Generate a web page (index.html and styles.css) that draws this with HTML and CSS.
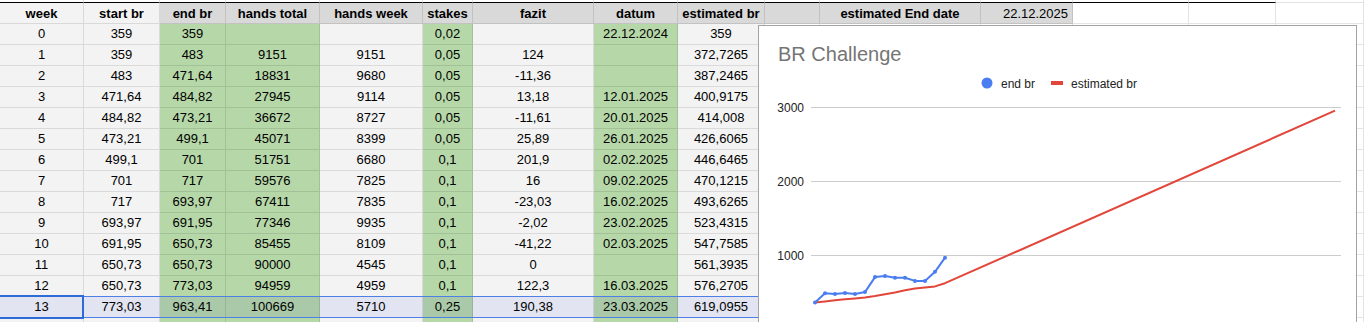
FILE: index.html
```html
<!DOCTYPE html>
<html>
<head>
<meta charset="utf-8">
<link rel="stylesheet" href="styles.css">
</head>
<body>
<div class="sheet">
  <div class="row top">
    <div class="c"></div><div class="c"></div><div class="c"></div><div class="c"></div><div class="c"></div><div class="c"></div><div class="c"></div><div class="c"></div><div class="c"></div><div class="c"></div><div class="c"></div><div class="c"></div><div class="c"></div><div class="c"></div><div class="c"></div>
  </div>
  <div class="row head">
    <div class="c hl">week</div><div class="c hl">start br</div><div class="c h">end br</div><div class="c h">hands total</div><div class="c h">hands week</div><div class="c h">stakes</div><div class="c h">fazit</div><div class="c h">datum</div><div class="c h">estimated br</div><div class="c h"></div><div class="c h">estimated End date</div><div class="c h val">22.12.2025</div><div class="c w"></div><div class="c w"></div><div class="c w last"></div>
  </div>
  <div class="row"><div class="c g">0</div><div class="c g">359</div><div class="c gr">359</div><div class="c gr"></div><div class="c g"></div><div class="c gr">0,02</div><div class="c g"></div><div class="c gr">22.12.2024</div><div class="c g">359</div><div class="c w"></div><div class="c w"></div><div class="c w"></div><div class="c w"></div><div class="c w"></div><div class="c w"></div></div>
  <div class="row"><div class="c g">1</div><div class="c g">359</div><div class="c gr">483</div><div class="c gr">9151</div><div class="c g">9151</div><div class="c gr">0,05</div><div class="c g">124</div><div class="c gr"></div><div class="c g">372,7265</div><div class="c w"></div><div class="c w"></div><div class="c w"></div><div class="c w"></div><div class="c w"></div><div class="c w"></div></div>
  <div class="row"><div class="c g">2</div><div class="c g">483</div><div class="c gr">471,64</div><div class="c gr">18831</div><div class="c g">9680</div><div class="c gr">0,05</div><div class="c g">-11,36</div><div class="c gr"></div><div class="c g">387,2465</div><div class="c w"></div><div class="c w"></div><div class="c w"></div><div class="c w"></div><div class="c w"></div><div class="c w"></div></div>
  <div class="row"><div class="c g">3</div><div class="c g">471,64</div><div class="c gr">484,82</div><div class="c gr">27945</div><div class="c g">9114</div><div class="c gr">0,05</div><div class="c g">13,18</div><div class="c gr">12.01.2025</div><div class="c g">400,9175</div><div class="c w"></div><div class="c w"></div><div class="c w"></div><div class="c w"></div><div class="c w"></div><div class="c w"></div></div>
  <div class="row"><div class="c g">4</div><div class="c g">484,82</div><div class="c gr">473,21</div><div class="c gr">36672</div><div class="c g">8727</div><div class="c gr">0,05</div><div class="c g">-11,61</div><div class="c gr">20.01.2025</div><div class="c g">414,008</div><div class="c w"></div><div class="c w"></div><div class="c w"></div><div class="c w"></div><div class="c w"></div><div class="c w"></div></div>
  <div class="row"><div class="c g">5</div><div class="c g">473,21</div><div class="c gr">499,1</div><div class="c gr">45071</div><div class="c g">8399</div><div class="c gr">0,05</div><div class="c g">25,89</div><div class="c gr">26.01.2025</div><div class="c g">426,6065</div><div class="c w"></div><div class="c w"></div><div class="c w"></div><div class="c w"></div><div class="c w"></div><div class="c w"></div></div>
  <div class="row"><div class="c g">6</div><div class="c g">499,1</div><div class="c gr">701</div><div class="c gr">51751</div><div class="c g">6680</div><div class="c gr">0,1</div><div class="c g">201,9</div><div class="c gr">02.02.2025</div><div class="c g">446,6465</div><div class="c w"></div><div class="c w"></div><div class="c w"></div><div class="c w"></div><div class="c w"></div><div class="c w"></div></div>
  <div class="row"><div class="c g">7</div><div class="c g">701</div><div class="c gr">717</div><div class="c gr">59576</div><div class="c g">7825</div><div class="c gr">0,1</div><div class="c g">16</div><div class="c gr">09.02.2025</div><div class="c g">470,1215</div><div class="c w"></div><div class="c w"></div><div class="c w"></div><div class="c w"></div><div class="c w"></div><div class="c w"></div></div>
  <div class="row"><div class="c g">8</div><div class="c g">717</div><div class="c gr">693,97</div><div class="c gr">67411</div><div class="c g">7835</div><div class="c gr">0,1</div><div class="c g">-23,03</div><div class="c gr">16.02.2025</div><div class="c g">493,6265</div><div class="c w"></div><div class="c w"></div><div class="c w"></div><div class="c w"></div><div class="c w"></div><div class="c w"></div></div>
  <div class="row"><div class="c g">9</div><div class="c g">693,97</div><div class="c gr">691,95</div><div class="c gr">77346</div><div class="c g">9935</div><div class="c gr">0,1</div><div class="c g">-2,02</div><div class="c gr">23.02.2025</div><div class="c g">523,4315</div><div class="c w"></div><div class="c w"></div><div class="c w"></div><div class="c w"></div><div class="c w"></div><div class="c w"></div></div>
  <div class="row"><div class="c g">10</div><div class="c g">691,95</div><div class="c gr">650,73</div><div class="c gr">85455</div><div class="c g">8109</div><div class="c gr">0,1</div><div class="c g">-41,22</div><div class="c gr">02.03.2025</div><div class="c g">547,7585</div><div class="c w"></div><div class="c w"></div><div class="c w"></div><div class="c w"></div><div class="c w"></div><div class="c w"></div></div>
  <div class="row"><div class="c g">11</div><div class="c g">650,73</div><div class="c gr">650,73</div><div class="c gr">90000</div><div class="c g">4545</div><div class="c gr">0,1</div><div class="c g">0</div><div class="c gr"></div><div class="c g">561,3935</div><div class="c w"></div><div class="c w"></div><div class="c w"></div><div class="c w"></div><div class="c w"></div><div class="c w"></div></div>
  <div class="row"><div class="c g">12</div><div class="c g">650,73</div><div class="c gr">773,03</div><div class="c gr">94959</div><div class="c g">4959</div><div class="c gr">0,1</div><div class="c g">122,3</div><div class="c gr">16.03.2025</div><div class="c g">576,2705</div><div class="c w"></div><div class="c w"></div><div class="c w"></div><div class="c w"></div><div class="c w"></div><div class="c w"></div></div>
  <div class="row sel"><div class="c g act">13</div><div class="c g">773,03</div><div class="c gr">963,41</div><div class="c gr">100669</div><div class="c g">5710</div><div class="c gr">0,25</div><div class="c g">190,38</div><div class="c gr">23.03.2025</div><div class="c g">619,0955</div><div class="c w"></div><div class="c w"></div><div class="c w"></div><div class="c w"></div><div class="c w"></div><div class="c w"></div></div>
  <div class="row tail"><div class="c g"></div><div class="c g"></div><div class="c gr"></div><div class="c gr"></div><div class="c g"></div><div class="c gr"></div><div class="c g"></div><div class="c gr"></div><div class="c g"></div><div class="c w"></div><div class="c w"></div><div class="c w"></div><div class="c w"></div><div class="c w"></div><div class="c w"></div></div>
</div>

<div class="chart">
  <svg width="597" height="296" viewBox="759 26 597 296" xmlns="http://www.w3.org/2000/svg">
    <text x="778" y="61" class="title">BR Challenge</text>
    <circle cx="987" cy="83" r="5.5" fill="#4a7df0"/>
    <text x="1001" y="87.5" class="lbl">end br</text>
    <rect x="1051" y="81" width="12" height="4" fill="#e2463a"/>
    <text x="1071" y="87.5" class="lbl">estimated br</text>
    <g stroke="#cccccc" stroke-width="1">
      <line x1="811" y1="107.5" x2="1341" y2="107.5"/>
      <line x1="811" y1="181.5" x2="1341" y2="181.5"/>
      <line x1="811" y1="255.5" x2="1341" y2="255.5"/>
    </g>
    <text x="804" y="111.5" class="ax">3000</text>
    <text x="804" y="185.5" class="ax">2000</text>
    <text x="804" y="259.5" class="ax">1000</text>
    <polyline fill="none" stroke="#e2463a" stroke-width="2" stroke-linejoin="round" points="815,302.4 825,301.4 835,300.3 845,299.3 855,298.4 865,297.4 875,296 885,294.2 895,292.5 905,290.3 915,288.5 925,287.5 935,286.4 945,283.2 1335,110.7"/>
    <polyline fill="none" stroke="#4a7df0" stroke-width="2" stroke-linejoin="round" points="815,302.4 825,293.3 835,294.1 845,293.1 855,294 865,292.1 875,277.1 885,275.9 895,277.7 905,277.8 915,280.9 925,280.9 935,271.8 945,257.7"/>
    <g fill="#4a7df0">
      <circle cx="815" cy="302.4" r="2"/><circle cx="825" cy="293.3" r="2"/><circle cx="835" cy="294.1" r="2"/><circle cx="845" cy="293.1" r="2"/><circle cx="855" cy="294" r="2"/><circle cx="865" cy="292.1" r="2"/><circle cx="875" cy="277.1" r="2"/><circle cx="885" cy="275.9" r="2"/><circle cx="895" cy="277.7" r="2"/><circle cx="905" cy="277.8" r="2"/><circle cx="915" cy="280.9" r="2"/><circle cx="925" cy="280.9" r="2"/><circle cx="935" cy="271.8" r="2"/><circle cx="945" cy="257.7" r="2"/>
    </g>
  </svg>
</div>
</body>
</html>
```

FILE: styles.css
```css
html, body {
  margin: 0;
  padding: 0;
  background: #fff;
  overflow: hidden;
}

body {
  width: 1364px;
  height: 322px;
  position: relative;
  font: 13px "Liberation Sans", Arial, sans-serif;
  color: #000;
}

.sheet {
  display: flex;
  flex-direction: column;
}

.row {
  display: grid;
  grid-template-columns: 84px 76px 66px 94px 103px 50px 121px 84px 87px 55px 161px 92px 116px 87px 88px;
  height: 21px;
}

.c {
  box-sizing: border-box;
  height: 21px;
  border-right: 1px solid rgba(0, 0, 0, 0.1);
  border-bottom: 1px solid rgba(0, 0, 0, 0.1);
  text-align: center;
  line-height: 20px;
  white-space: nowrap;
  overflow: hidden;
}

.g { background: #f3f3f3; }
.gr { background: #b6d7a8; }
.w { background: #fff; }

.top { height: 2px; }
.top .c { height: 2px; border-bottom: 0; background: #fff; }

.tail { height: 4px; }
.tail .c { height: 4px; border-bottom: 0; }

.head { height: 22px; }
.head .c {
  height: 22px;
  border-top: 1px solid #000;
  font-weight: bold;
  line-height: 21px;
}
.head .hl { background: #f3f3f3; }
.head .h { background: #d9d9d9; }
.head .val {
  font-weight: normal;
  text-align: right;
  padding-right: 4px;
}
.head .last { border-top-color: #e2e2e2; }

.sel { position: relative; }
.sel .g { background: #e2e4f1; }
.sel .gr { background: #a9c9a9; }
.sel::before {
  content: "";
  position: absolute;
  left: 0;
  right: 20px;
  top: -1px;
  height: 22px;
  box-sizing: border-box;
  border-top: 1px solid #4d80e4;
  border-bottom: 1px solid #4d80e4;
  pointer-events: none;
}

.act { position: relative; overflow: visible; }
.act::after {
  content: "";
  position: absolute;
  left: -2px;
  right: -1px;
  top: -2px;
  bottom: -2px;
  border: 2px solid #2f6ad9;
}

.chart {
  position: absolute;
  left: 758px;
  top: 25px;
  width: 599px;
  height: 297px;
  box-sizing: border-box;
  border: 1px solid #a3a3a3;
  border-bottom: 0;
  background: #fff;
}

.chart svg { display: block; }

.title {
  font: 20px "Liberation Sans", Arial, sans-serif;
  fill: #757575;
}

.lbl {
  font: 12px "Liberation Sans", Arial, sans-serif;
  fill: #222;
}

.ax {
  font: 12px "Liberation Sans", Arial, sans-serif;
  fill: #222;
  text-anchor: end;
}
```
